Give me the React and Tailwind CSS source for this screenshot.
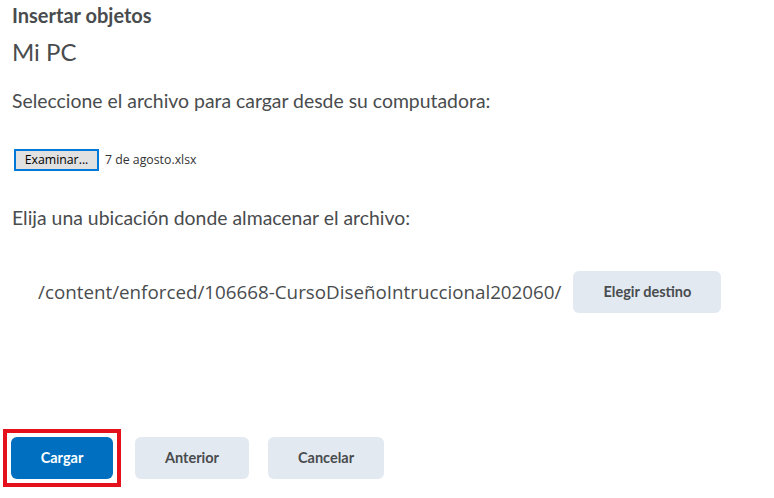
import React from 'react';

const GrayButton = ({ children, className = '' }) => (
  <button
    className={`h-[42px] rounded-[6px] bg-[#e3e9f1] text-[14.5px] font-bold text-[#494c4e] ${className}`}
  >
    {children}
  </button>
);

export default function App() {
  return (
    <div className="w-[774px] h-[498px] bg-white text-[#494c4e] font-['Lato',sans-serif] relative">
      {/* Header */}
      <div className="pl-[12px] pt-[2px]">
        <h2 className="text-[20px] font-bold leading-[26px]">Insertar objetos</h2>
        <h1 className="mt-[9px] text-[24px] leading-[30px]">Mi PC</h1>
      </div>

      <p className="pl-[12px] mt-[21px] text-[19.4px] leading-[26px]">
        Seleccione el archivo para cargar desde su computadora:
      </p>

      {/* File input */}
      <div className="flex items-center pl-[14px] mt-[35px] font-['Open_Sans',sans-serif] text-[12.3px]">
        <span className="h-[22px] w-[85px] flex items-center justify-center border-2 border-[#0078d7] bg-[#e1e1e1] text-black">
          Examinar...
        </span>
        <span className="ml-[6px] text-[#333]">7 de agosto.xlsx</span>
      </div>

      <p className="pl-[12px] mt-[34px] text-[19.4px] leading-[26px]">
        Elija una ubicación donde almacenar el archivo:
      </p>

      {/* Destination */}
      <div className="flex items-center pl-[38px] mt-[40px]">
        <span className="font-['Open_Sans',sans-serif] text-[18.8px] text-[#494c4e]">
          /content/enforced/106668-CursoDiseñoIntruccional202060/
        </span>
        <GrayButton className="ml-[12px] w-[148px]">Elegir destino</GrayButton>
      </div>

      {/* Footer buttons */}
      <div className="absolute left-[3px] top-[429px] flex items-center">
        <div className="border-[4px] border-[#e4111c] p-[4px]">
          <button className="h-[42px] w-[102px] rounded-[6px] bg-[#006fbf] text-[14.5px] font-bold text-white">
            Cargar
          </button>
        </div>
        <GrayButton className="ml-[14px] w-[114px]">Anterior</GrayButton>
        <GrayButton className="ml-[19px] w-[116px]">Cancelar</GrayButton>
      </div>
    </div>
  );
}
